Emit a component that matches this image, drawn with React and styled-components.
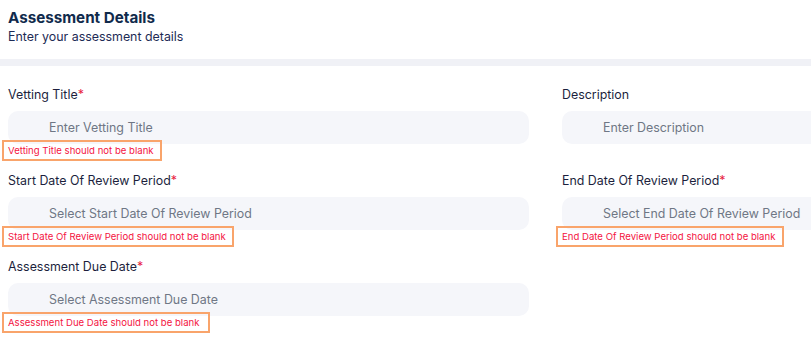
import React from "react";
import styled, { createGlobalStyle } from "styled-components";

const Global = createGlobalStyle`
  html, body { margin: 0; padding: 0; background: #ffffff; overflow: hidden; }
  body { font-family: Inter, "Noto Sans", sans-serif; }
  * { box-sizing: border-box; }
`;

const Page = styled.div`
  width: 811px;
  height: 354px;
  overflow: hidden;
`;

const Header = styled.header`
  padding: 8px 8px 14px 8px;
`;

const Title = styled.h1`
  margin: 0;
  font-size: 15.2px;
  line-height: 20px;
  font-weight: 700;
  color: #102a4c;
`;

const Subtitle = styled.p`
  margin: 1px 0 0;
  font-size: 12.4px;
  line-height: 16px;
  color: #1d2b55;
`;

const Band = styled.div`
  height: 7px;
  background: #f0f1f6;
`;

const Form = styled.div`
  display: grid;
  grid-template-columns: 521px 521px;
  column-gap: 33px;
  row-gap: 15px;
  padding: 21px 0 0 8px;
  width: 1200px;
`;

const Field = styled.div`
  display: flex;
  flex-direction: column;
  align-items: flex-start;
`;

const Label = styled.label`
  font-size: 12.4px;
  line-height: 16px;
  color: #1c1f3d;
`;

const Req = styled.span`
  color: #e8233f;
`;

const Input = styled.div`
  margin-top: 8px;
  width: 100%;
  height: 33px;
  border-radius: 10px;
  background: #f5f6fa;
  display: flex;
  align-items: center;
  padding-left: 41px;
  font-size: 12.4px;
  color: #6f7785;
`;

const Error = styled.span`
  position: relative;
  display: inline-block;
  font-size: 9.6px;
  line-height: 14px;
  color: #f4143f;
  visibility: ${(p) => (p.$hidden ? "hidden" : "visible")};

  &::after {
    content: "";
    position: absolute;
    left: -6px;
    right: ${(p) => p.$r || -8}px;
    top: -4px;
    bottom: -3px;
    border: 2px solid #f9a46b;
  }
`;

const fields = [
  { label: "Vetting Title", req: true, ph: "Enter Vetting Title", err: "Vetting Title should not be blank" },
  { label: "Description", req: false, ph: "Enter Description" },
  { label: "Start Date Of Review Period", req: true, ph: "Select Start Date Of Review Period", err: "Start Date Of Review Period should not be blank", r: -8 },
  { label: "End Date Of Review Period", req: true, ph: "Select End Date Of Review Period", err: "End Date Of Review Period should not be blank", r: -9 },
  { label: "Assessment Due Date", req: true, ph: "Select Assessment Due Date", err: "Assessment Due Date should not be blank", r: -10 },
];

export default function App() {
  return (
    <Page>
      <Global />
      <Header>
        <Title>Assessment Details</Title>
        <Subtitle>Enter your assessment details</Subtitle>
      </Header>
      <Band />
      <Form>
        {fields.map((f) => (
          <Field key={f.label}>
            <Label>
              {f.label}
              {f.req && <Req>*</Req>}
            </Label>
            <Input>{f.ph}</Input>
            {f.err ? <Error $r={f.r}>{f.err}</Error> : <Error $hidden>&nbsp;</Error>}
          </Field>
        ))}
      </Form>
    </Page>
  );
}
